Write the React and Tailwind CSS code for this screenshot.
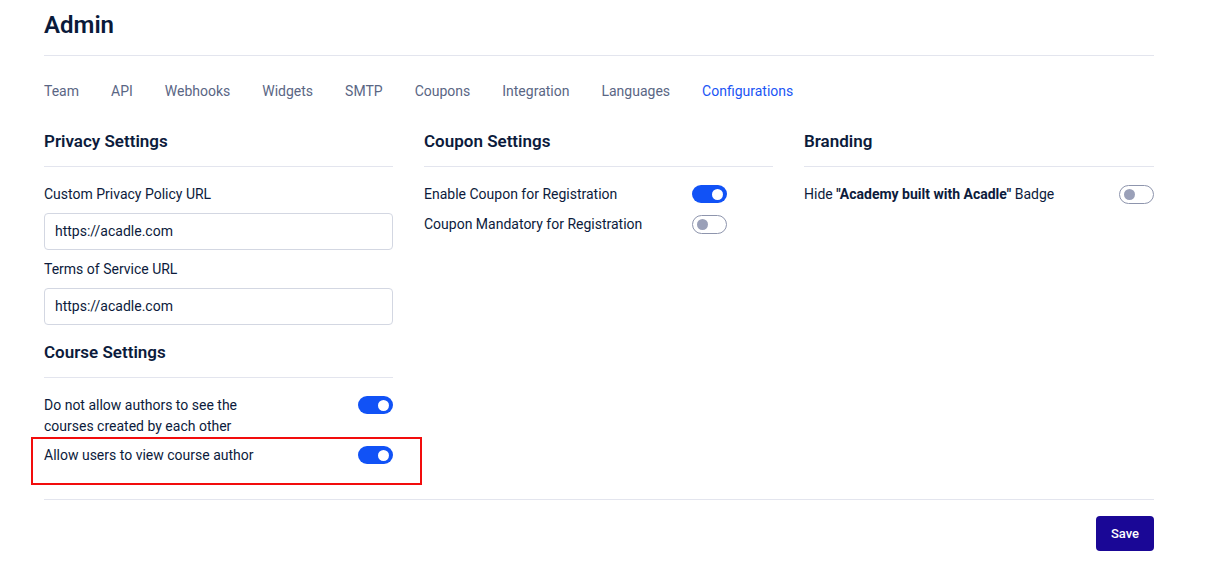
import React from "react";

function Toggle({ on }) {
  return on ? (
    <div className="w-[35px] h-[18px] rounded-full bg-[#1152f6] flex items-center justify-end pr-[4px] shrink-0">
      <div className="w-[11px] h-[11px] rounded-full bg-white" />
    </div>
  ) : (
    <div className="w-[35px] h-[19px] rounded-full bg-white border border-[#8e95ad] flex items-center justify-start pl-[4px] shrink-0">
      <div className="w-[11px] h-[11px] rounded-full bg-[#9aa0b8]" />
    </div>
  );
}

function Heading({ children }) {
  return (
    <div className="border-b border-[#e3e5ee] h-[45px] flex items-start">
      <h2 className="text-[17px] leading-[22px] font-semibold text-[#0c1b3c] mt-[8px]">{children}</h2>
    </div>
  );
}

const tabs = ["Team", "API", "Webhooks", "Widgets", "SMTP", "Coupons", "Integration", "Languages", "Configurations"];

export default function App() {
  return (
    <div
      className="w-[1228px] h-[578px] bg-white text-[#0c1b3c] overflow-hidden"
      style={{ fontFamily: 'Roboto, "Noto Sans", Arial, sans-serif' }}
    >
      <div className="ml-[44px] w-[1110px]">
        <div className="h-[56px] border-b border-[#e3e5ee] pt-[10px]">
          <h1 className="text-[24px] leading-[31px] font-semibold text-[#0a1a3a]">Admin</h1>
        </div>
        <div className="flex gap-8 mt-[24px] h-[22px] items-center text-[14px] text-[#5a6684]">
          {tabs.map((t) => (
            <span key={t} className={t === "Configurations" ? "text-[#1a55f5]" : ""}>
              {t}
            </span>
          ))}
        </div>
        <div className="grid grid-cols-[349px_349px_350px] gap-[31px] mt-[20px]">
          <div>
            <Heading>Privacy Settings</Heading>
            <div className="text-[14px] leading-[20px] mt-[17px]">Custom Privacy Policy URL</div>
            <div className="mt-[9px] h-[37px] border border-[#d3d7e2] rounded-[4px] flex items-center px-[10px] text-[14px]">
              https://acadle.com
            </div>
            <div className="text-[14px] leading-[20px] mt-[9px]">Terms of Service URL</div>
            <div className="mt-[9px] h-[37px] border border-[#d3d7e2] rounded-[4px] flex items-center px-[10px] text-[14px]">
              https://acadle.com
            </div>
            <div className="mt-[8px]">
              <Heading>Course Settings</Heading>
            </div>
            <div className="flex justify-between items-start mt-[17px] text-[14px] leading-[21px]">
              <div className="w-[210px]">Do not allow authors to see the courses created by each other</div>
              <div className="mt-[1px]">
                <Toggle on />
              </div>
            </div>
            <div className="relative flex justify-between items-start mt-[8px] text-[14px] leading-[21px] h-[39px]">
              <div>Allow users to view course author</div>
              <div className="mt-[1px]">
                <Toggle on />
              </div>
              <div className="absolute left-[-13px] right-[-29px] top-[-8px] h-[48px] border-2 border-[#f20d0d]" />
            </div>
          </div>
          <div>
            <Heading>Coupon Settings</Heading>
            <div className="w-[303px]">
              <div className="flex justify-between items-center mt-[17px] text-[14px] leading-[20px]">
                <div>Enable Coupon for Registration</div>
                <Toggle on />
              </div>
              <div className="flex justify-between items-center mt-[10px] text-[14px] leading-[20px]">
                <div>Coupon Mandatory for Registration</div>
                <Toggle />
              </div>
            </div>
          </div>
          <div>
            <Heading>Branding</Heading>
            <div className="flex justify-between items-center mt-[17px] text-[14px] leading-[20px]">
              <div>
                Hide <b className="font-bold">"Academy built with Acadle"</b> Badge
              </div>
              <Toggle />
            </div>
          </div>
        </div>
        <div className="border-t border-[#e3e5ee] mt-[15px] flex justify-end pt-[16px]">
          <button className="w-[58px] h-[35px] rounded-[4px] bg-[#1a0796] text-white text-[13px] font-medium">
            Save
          </button>
        </div>
      </div>
    </div>
  );
}
